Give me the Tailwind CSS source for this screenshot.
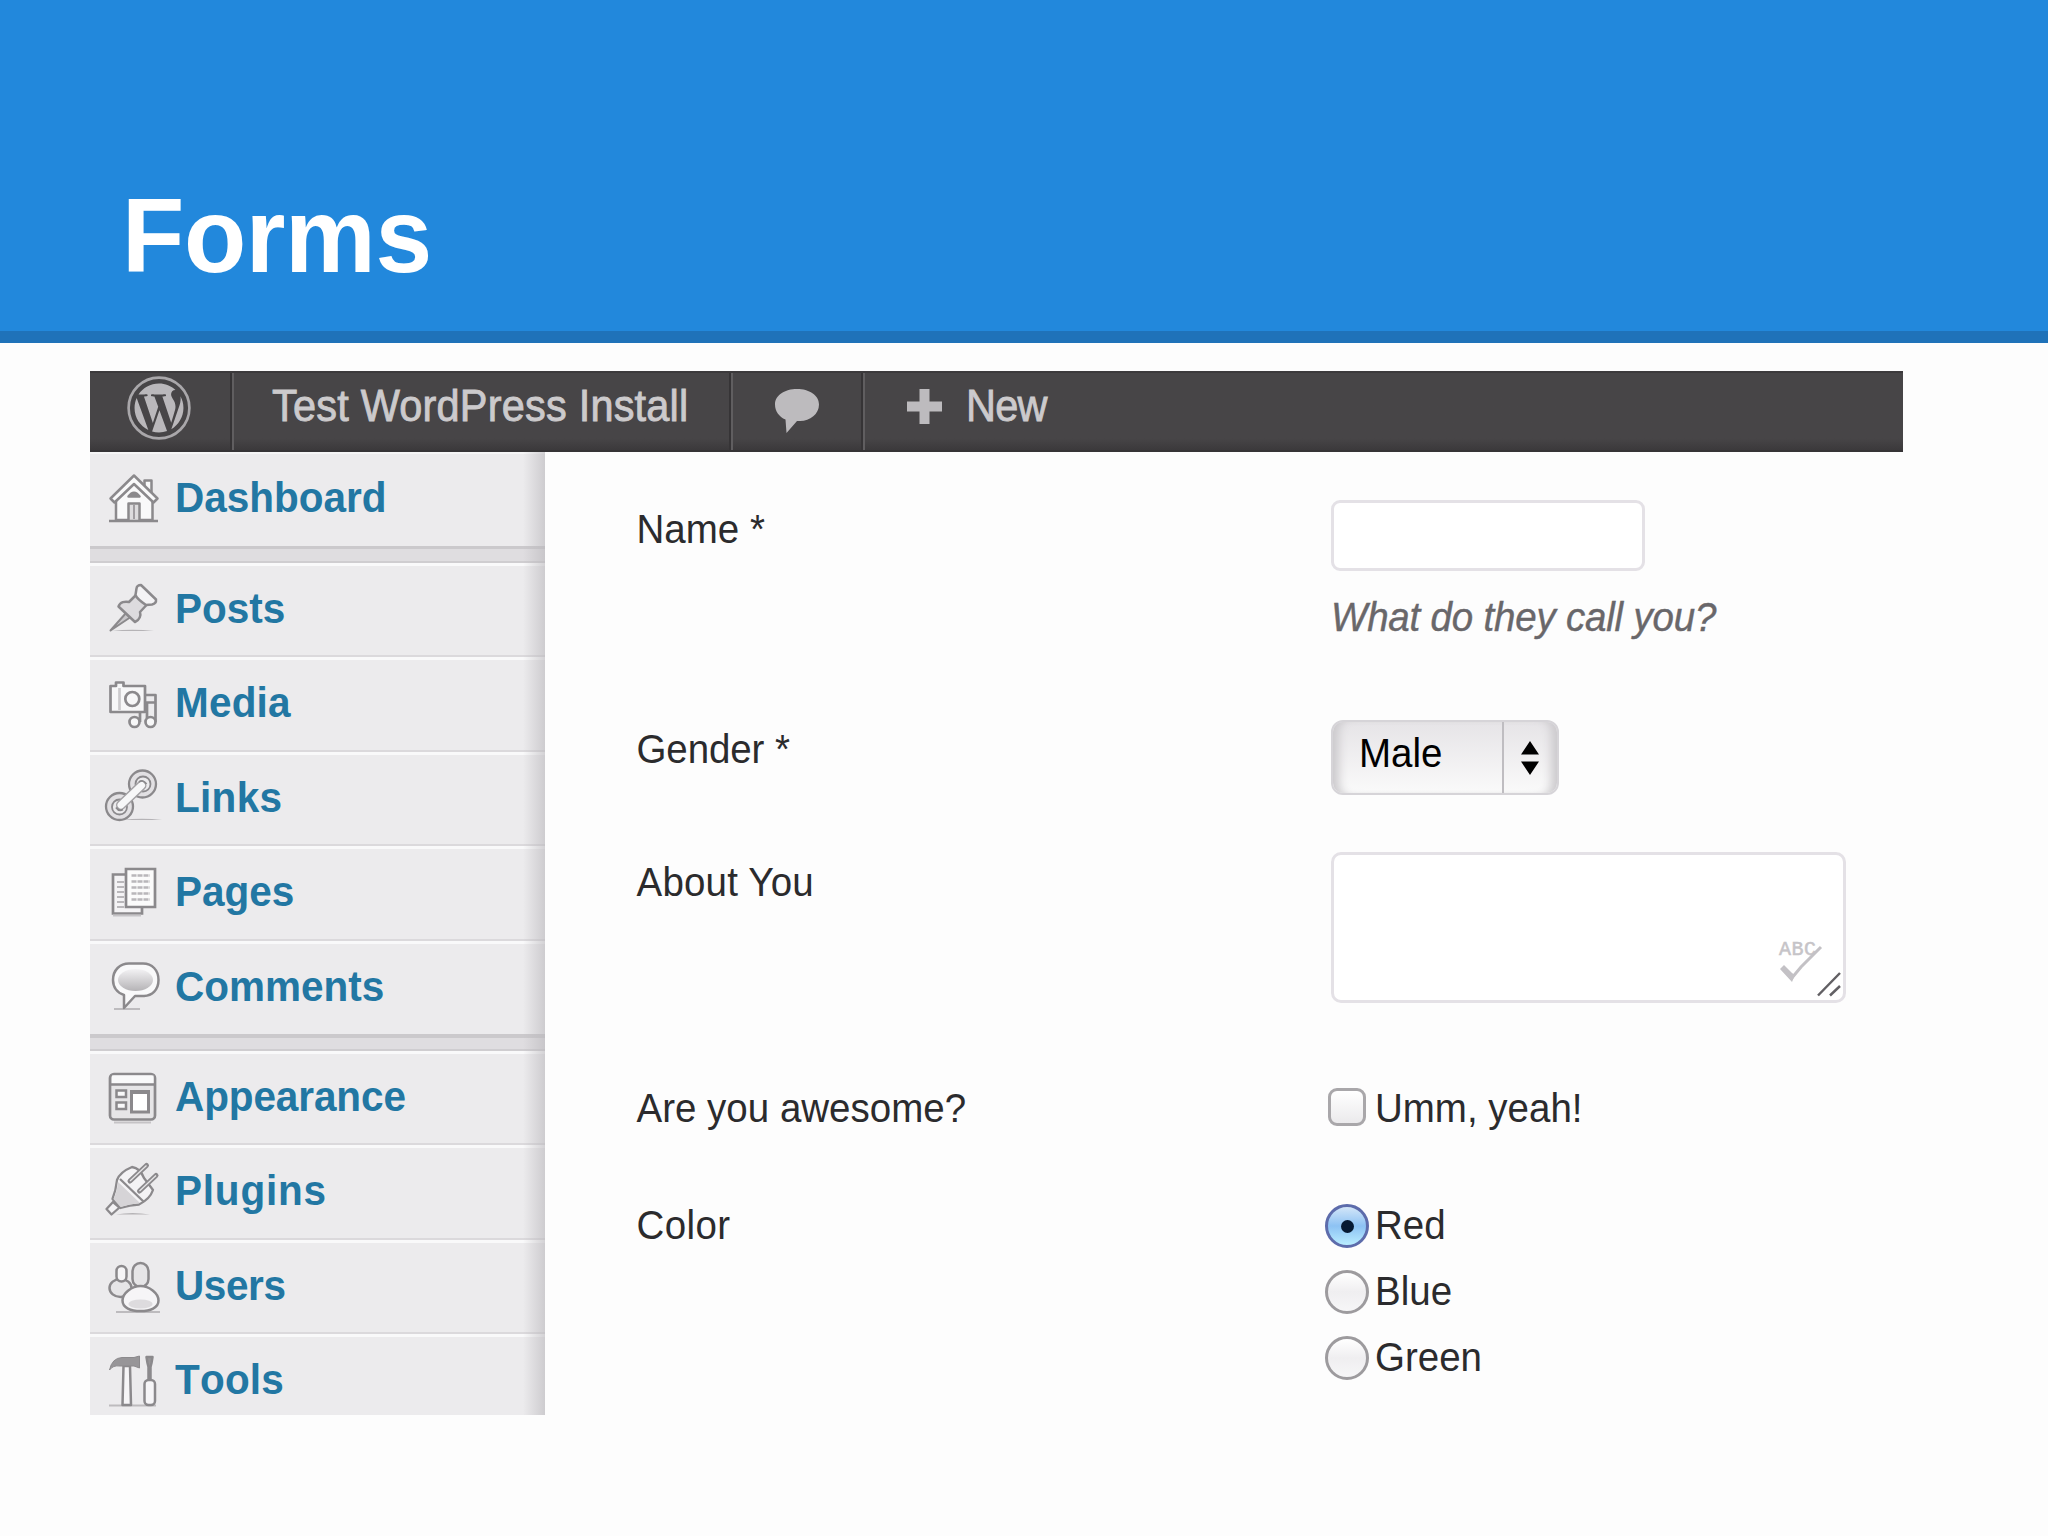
<!DOCTYPE html>
<html lang="en">

<head>
  <meta charset="UTF-8">
  <meta name="viewport" content="width=device-width, initial-scale=1.0">
  <title>Forms</title>
  <script src="https://cdn.jsdelivr.net/npm/@tailwindcss/browser@4"></script>
</head>

<body class="w-[2048px] h-[1536px] overflow-hidden bg-[#fdfdfd] font-['Liberation_Sans',Arial,sans-serif]">
  <header class="h-[343px] bg-[#2288dc] border-b-12 border-[#1f72b9] pl-[122px] pt-[176px]">
    <h1 class="origin-[0_97px] scale-y-[1.045] text-[102px] leading-[123px] font-bold text-white tracking-[-0.4px] [font-kerning:none]">Forms</h1>
  </header>

  <main class="ml-[90px] mt-[28px] w-[1813px] h-[1044px] overflow-hidden">
    <!-- admin bar -->
    <nav class="flex h-[81px] bg-linear-to-b from-[#474547] from-85% to-[#3b393b] border-t-2 border-b-2 border-t-[#3c3a3c] border-b-[#363436] text-[41.500px] leading-[68px] text-[#cccacc] [-webkit-text-stroke:0.8px_#cccacc]">
      <div class="w-[142px] pl-[37px] pt-[3px] border-r-2 border-[#363436]">
        <svg class="size-[64px]" viewBox="0 0 24 24" fill="#bab8bb">
          <circle cx="12" cy="12" r="11.4" fill="none" stroke="#a9a7aa" stroke-width="1" />
          <path transform="translate(1.8 1.8) scale(.85)" d="M21.469 6.825c.84 1.537 1.318 3.3 1.318 5.175 0 3.979-2.156 7.456-5.363 9.325l3.295-9.527c.615-1.54.82-2.771.82-3.864 0-.405-.026-.78-.07-1.11m-7.981.105c.647-.03 1.232-.105 1.232-.105.582-.075.514-.93-.067-.899 0 0-1.755.135-2.88.135-1.064 0-2.85-.15-2.85-.15-.585-.03-.661.855-.075.885 0 0 .54.061 1.125.09l1.68 4.605-2.37 7.08L5.354 6.9c.649-.03 1.234-.1 1.234-.1.585-.075.516-.93-.065-.896 0 0-1.746.138-2.874.138-.2 0-.438-.008-.69-.015C4.911 3.15 8.235 1.215 12 1.215c2.809 0 5.365 1.072 7.286 2.833-.046-.003-.091-.009-.141-.009-1.06 0-1.812.923-1.812 1.914 0 .89.513 1.643 1.06 2.531.411.72.89 1.643.89 2.977 0 .915-.354 1.994-.821 3.479l-1.075 3.585-3.9-11.61.001.014zM12 22.784c-1.059 0-2.081-.153-3.048-.437l3.237-9.406 3.315 9.087c.024.053.05.101.078.149-1.12.393-2.325.609-3.582.609M1.211 12c0-1.564.336-3.05.935-4.39L7.29 21.709C3.694 19.96 1.212 16.271 1.211 12" />
        </svg>
      </div>
      <div class="w-[499px] pl-[38px] border-l-2 border-r-2 border-l-[#605e60] border-r-[#363436]">
        <span class="block origin-[0_49px] scale-y-105 tracking-[0.2px]">Test WordPress Install</span>
      </div>
      <div class="w-[132px] pl-[40px] pt-[14px] border-l-2 border-r-2 border-l-[#605e60] border-r-[#363436]">
        <svg class="w-[48px] h-[48px]" viewBox="0 0 48 48">
          <path d="M24 2C36 2 46 8 46 17.500S37 34 27 34H24L13.500 46L12.500 32.500C6 30 2 24 2 17.500C2 8 12 2 24 2Z" fill="#bdbbbe" />
        </svg>
      </div>
      <div class="flex pl-[42px] border-l-2 border-[#605e60]">
        <svg class="mt-[16px] size-[35px]" viewBox="0 0 35 35">
          <path d="M12.500 0h10v12.500H35v10H22.500V35h-10V22.500H0v-10h12.500z" fill="#bdbbbe" />
        </svg>
        <span class="ml-[24px] origin-[0_49px] scale-y-105 tracking-[-0.8px]">New</span>
      </div>
    </nav>

    <div class="flex h-[963px]">
      <aside class="relative w-[455px] overflow-hidden bg-[#ecebed] text-[40.500px] leading-[87px] font-bold text-[#2277a3]">
        <a class="flex h-[94px] border-t-2 border-[#f5f5f6]">
          <svg class="ml-[12px] mt-[13px] mr-[13px] size-[60px] shrink-0" viewBox="0 0 60 60" fill="#f9f9fa" stroke="#8b898c" stroke-width="2.5" stroke-linejoin="round">
            <path d="M42.500 20V13.500H49.500V28" />
            <path d="M14 53V31L32 14L50.500 31V53Z" />
            <path d="M32 8.500L8.500 31.500L12.500 35.500L32 17L51.500 35.500L55.500 31.500Z" />
            <path d="M26.500 29.500Q32 22 37.500 29.500Z" fill="#8b898c" />
            <path d="M26.500 53V36.500H37.500V53" fill="#dddcde" />
            <path d="M32 38V52" stroke-width="1.5" />
            <path d="M7 54H56" />
          </svg>
          <span class="mt-px origin-[0_57px] scale-y-[1.06]">Dashboard</span>
        </a>
        <div class="h-[17px] bg-[#dfdde0] border-t-3 border-b-2 border-t-[#cbc9cc] border-b-[#cfcdd0]"></div>

        <a class="flex h-[94.4px] border-t-3 border-b-2 border-t-[#f9f9fa] border-b-[#dbd9dc]">
          <svg class="ml-[12px] mt-[12px] mr-[13px] size-[60px] shrink-0" viewBox="0 0 60 60" fill="#f4f3f5" stroke="#8b898c" stroke-width="2.5" stroke-linejoin="round">
            <path d="M10 53Q30 50.500 52 53Z" stroke="none" fill="#b5b3b6" />
            <path d="M24 35L8.500 52.500L28 39.500Z" fill="#c9c7ca" stroke-width="2" />
            <path d="M34 17L27 24C23 23 18 24 16.500 28.500L33 44C38 42 39 37 38 34L44.500 27Z" fill="#dddbde" />
            <path d="M34.500 10.500Q35 7 39 7L54 21.500Q54.500 25.500 50 26.500L44 27Q35 21 33.500 17Z" />
          </svg>
          <span class="origin-[0_57px] scale-y-[1.06]">Posts</span>
        </a>
        <a class="flex h-[94.4px] border-t-3 border-b-2 border-t-[#f9f9fa] border-b-[#dbd9dc]">
          <svg class="ml-[12px] mt-[12px] mr-[13px] size-[60px] shrink-0" viewBox="0 0 60 60" fill="#f7f7f8" stroke="#8b898c" stroke-width="2.700" stroke-linejoin="round">
            <path d="M38 40V50M53.500 23V50M43 23H53.500V30.500H43M45 30V46" fill="none" />
            <path d="M8.500 14H14V10.500H21.500V14H43V40H8.500Z" />
            <path d="M17.500 16V38" stroke="#cccacd" />
            <circle cx="30.300" cy="27" r="7" />
            <circle cx="32.500" cy="50" r="5" />
            <circle cx="48.500" cy="50" r="5" />
          </svg>
          <span class="origin-[0_57px] scale-y-[1.06] tracking-[0.2px]">Media</span>
        </a>
        <a class="flex h-[94.4px] border-t-3 border-b-2 border-t-[#f9f9fa] border-b-[#dbd9dc]">
          <svg class="ml-[12px] mt-[12px] mr-[13px] size-[60px] shrink-0 overflow-visible" viewBox="0 0 60 60" fill="none" stroke="#8b898c" stroke-width="2.300" stroke-linejoin="round">
            <path d="M20 53Q40 50.500 60 53Z" stroke="none" fill="#b5b3b6" />
            <circle cx="40.500" cy="17" r="13.500" fill="#e2e0e3" />
            <circle cx="41" cy="17" r="7.500" fill="#ecebed" stroke-width="1.800" />
            <circle cx="17.500" cy="39.500" r="13.500" fill="#e2e0e3" />
            <circle cx="17.500" cy="40" r="7.500" fill="#ecebed" stroke-width="1.800" />
            <path d="M19 38L39.500 18.500" stroke-width="10" stroke-linecap="round" stroke="#a3a1a4" />
            <path d="M19 38L39.500 18.500" stroke="#f7f7f8" stroke-width="7" stroke-linecap="round" />
            <path d="M37 15Q41 12 44.500 17M21 42.500Q17 45 14 40.500" stroke-width="1.800" />
          </svg>
          <span class="origin-[0_57px] scale-y-[1.06] tracking-[0.3px]">Links</span>
        </a>
        <a class="flex h-[94.4px] border-t-3 border-b-2 border-t-[#f9f9fa] border-b-[#dbd9dc]">
          <svg class="ml-[12px] mt-[12px] mr-[13px] size-[60px] shrink-0" viewBox="0 0 60 60" fill="#f4f3f5" stroke="#8b898c" stroke-width="2.700">
            <path d="M11 13.500H40V52.500H11Z" />
            <path d="M15 21H22M15 26H22M15 31H22M15 36H22M15 41H22M15 46H22" stroke="#b9b7ba" stroke-width="2" />
            <path d="M24 8H53V46H24Z" fill="#fbfbfb" />
            <path d="M29.500 14.500H48M29.500 20.500H48M29.500 26.500H48M29.500 32.500H48M29.500 38.500H48" stroke="#b9b7ba" stroke-width="2.500" stroke-dasharray="5 1" />
            <path d="M11 54.500H39" stroke="#c5c3c6" stroke-width="2" />
          </svg>
          <span class="origin-[0_57px] scale-y-[1.06]">Pages</span>
        </a>
        <a class="flex h-[93.400px] border-t-3 border-[#f9f9fa]">
          <svg class="ml-[12px] mt-[12px] mr-[13px] size-[60px] shrink-0" viewBox="0 0 60 60" fill="#f9f9fa" stroke="#8b898c" stroke-width="2.500" stroke-linejoin="round">
            <defs>
              <linearGradient id="bubble" x2="0" y2="1">
                <stop offset="0" stop-color="#f3f2f4" />
                <stop offset="1" stop-color="#b5b3b6" />
              </linearGradient>
            </defs>
            <path d="M12 53H38" stroke="#bdbbbe" stroke-width="2" />
            <path d="M27 7.500H41C50 7.500 56.500 14 56.500 24S50 39.500 42 40H33L22 52V39C15 37 11 31 11 24C11 14 18 7.500 27 7.500Z" />
            <ellipse cx="33.500" cy="24" rx="17.500" ry="11" fill="url(#bubble)" stroke="none" />
          </svg>
          <span class="origin-[0_57px] scale-y-[1.06]">Comments</span>
        </a>
        <div class="h-[17px] bg-[#dfdde0] border-t-4 border-b-2 border-t-[#cbc9cc] border-b-[#cfcdd0]"></div>

        <a class="flex h-[94.4px] border-t-3 border-b-2 border-t-[#f9f9fa] border-b-[#dbd9dc]">
          <svg class="ml-[12px] mt-[12px] mr-[13px] size-[60px] shrink-0" viewBox="0 0 60 60" fill="#f9f9fa" stroke="#8b898c" stroke-width="2.700">
            <path d="M12 56.500H49" stroke="#c5c3c6" stroke-width="2" />
            <rect x="8" y="8" width="45" height="45.500" rx="4" fill="#e6e5e7" />
            <path d="M10 17.500V9.500H51.500V17.500Z" stroke="none" />
            <path d="M8 18.500H53" stroke-width="2.500" />
            <path d="M14.500 24.500H24V31H14.500ZM14.500 36.500H24V43H14.500Z" stroke-width="2.500" />
            <path d="M29.500 25.500H46.500V46H29.500Z" fill="#fff" stroke-width="3" />
            <path d="M28 26H48" stroke-width="4" />
          </svg>
          <span class="origin-[0_57px] scale-y-[1.06] tracking-[-0.1px]">Appearance</span>
        </a>
        <a class="flex h-[94.4px] border-t-3 border-b-2 border-t-[#f9f9fa] border-b-[#dbd9dc]">
          <svg class="ml-[12px] mt-[12px] mr-[13px] size-[60px] shrink-0" viewBox="0 0 60 60" fill="#f4f3f5" stroke="#8b898c" stroke-width="2.300" stroke-linejoin="round">
            <path d="M14 54.500Q30 51.500 48 54.500Z" stroke="none" fill="#b5b3b6" />
            <path d="M11 42L4.500 49L9.500 54.500L17.500 47.500Z" />
            <path d="M30 7Q18 12 15 20Q14 30 10.500 39L18.500 48Q28 45 37 44.500Q48 39 51 30L42 18Q38 8 30 7Z" />
            <path d="M16 22Q15 32 11.500 39L18.500 47Q28 44 38 43Z" fill="#d6d4d7" stroke="none" />
            <path d="M18 19L42 42" />
            <path d="M28 21L44.500 5.500M37.500 31L54 15.500" stroke-width="5" stroke-linecap="round" />
            <path d="M28 21L44.500 5.500M37.500 31L54 15.500" stroke="#e6e5e7" stroke-width="1.300" />
          </svg>
          <span class="origin-[0_57px] scale-y-[1.06] tracking-[0.8px]">Plugins</span>
        </a>
        <a class="flex h-[94.4px] border-t-3 border-b-2 border-t-[#f9f9fa] border-b-[#dbd9dc]">
          <svg class="ml-[12px] mt-[12px] mr-[13px] size-[60px] shrink-0" viewBox="0 0 60 60" fill="#f6f5f7" stroke="#8b898c" stroke-width="2.500">
            <path d="M14 57H58" stroke="#bdbbbe" stroke-width="2" />
            <ellipse cx="18.500" cy="33" rx="11" ry="9" fill="#e6e5e7" />
            <rect x="14.500" y="11" width="10" height="15.500" rx="5" />
            <rect x="30.500" y="8" width="16" height="24" rx="8" fill="#e6e5e7" />
            <path d="M38.500 31C47 31 56.500 38 56.500 45.500S48 56 38.500 56S20.500 53 20.500 45.500S30 31 38.500 31Z" />
            <ellipse cx="38.500" cy="49" rx="12" ry="4.500" fill="#dddbde" stroke="none" />
          </svg>
          <span class="origin-[0_57px] scale-y-[1.06] tracking-[-0.4px]">Users</span>
        </a>
        <a class="flex h-[94.4px] border-t-3 border-[#f9f9fa]">
          <svg class="ml-[12px] mt-[12px] mr-[13px] size-[60px] shrink-0" viewBox="0 0 60 60" fill="#f6f5f7" stroke="#8b898c" stroke-width="2.500" stroke-linejoin="round">
            <path d="M7 56.500H54" stroke="#bdbbbe" stroke-width="2" />
            <path d="M21.500 17H28L29 56H20.500Z" />
            <path d="M7.500 21Q10 9 20 8.500H32L37.500 7V19L32 17H18Q11 16 7.500 21Z" fill="#979598" stroke-width="1" />
            <path d="M44.500 8H50.500L49.500 14L48.500 18V31H46.500V18L45.500 14Z" fill="#979598" />
            <rect x="42.500" y="31" width="10.500" height="25" rx="4" />
          </svg>
          <span class="origin-[0_57px] scale-y-[1.06] tracking-[0.2px] [font-kerning:none]">Tools</span>
        </a>
        <!-- inner shadow along the right edge of the menu -->
        <div class="absolute inset-y-0 right-0 w-[22px] bg-linear-to-r from-transparent to-[#b9b7bb]/60"></div>
      </aside>

      <form class="flex-1 pl-[91.500px] pt-[48px] text-[38.500px] leading-[48px] text-[#2b2b2d]">
        <div class="flex h-[220px]">
          <label class="w-[694.500px] pt-[5.500px] origin-[0_43px] scale-y-105">Name *</label>
          <div>
            <div class="w-[314px] h-[71px] rounded-[9px] border-3 border-[#e4e1e6] bg-white"></div>
            <p class="mt-[23px] origin-[0_38px] scale-y-105 italic text-[#69676a] tracking-[-0.2px] [-webkit-text-stroke:0.4px_#69676a]">What do they call you?</p>
          </div>
        </div>

        <div class="flex h-[132px]">
          <label class="w-[694.500px] pt-[5.500px] origin-[0_43px] scale-y-105 tracking-[-0.1px]">Gender *</label>
          <div class="flex w-[228px] h-[75px] rounded-[12px] border-2 border-[#d6d4d8] bg-linear-to-b from-[#e6e4e7] to-[#fafafa] shadow-[inset_12px_0_10px_-6px_#cccacd,inset_-12px_0_10px_-6px_#cccacd]">
            <span class="w-[171px] pl-[26px] leading-[64px] text-black border-r-2 border-[#bfbdc1]">
              <span class="block origin-[0_45px] scale-y-105">Male</span>
            </span>
            <svg class="ml-[16px] mt-[19px] w-[20px] h-[34px]" viewBox="0 0 20 34">
              <path d="M10 0L19 13.500H1ZM1 20.500H19L10 34Z" />
            </svg>
          </div>
        </div>

        <div class="flex h-[228px]">
          <label class="w-[694.500px] pt-[6.500px] origin-[0_43px] scale-y-105 tracking-[0.2px]">About You</label>
          <div class="flex justify-end items-end w-[515px] h-[151px] rounded-[10px] border-3 border-[#e4e1e6] bg-white">
            <svg class="w-[68px] h-[64px]" viewBox="0 0 68 64">
              <text x="4" y="19" font-size="20" letter-spacing="0.5" font-family="Liberation Mono" fill="#c6c4c8" stroke="#c6c4c8" stroke-width="0.5">ABC</text>
              <path d="M5 33L9 29L17 37L20 39L17 46Z" fill="#c3c1c5" />
              <path d="M16 43L26 31L46 11" stroke="#c3c1c5" stroke-width="3" fill="none" />
              <path d="M43 59.500L65 37M55 59.500L65 50" stroke="#626064" stroke-width="2.500" fill="none" />
            </svg>
          </div>
        </div>

        <div class="flex h-[113px]">
          <label class="w-[694.500px] pt-[4.500px] origin-[0_42px] scale-y-105">Are you awesome?</label>
          <div class="flex pt-[4.500px] -ml-[3px]">
            <span class="mt-[3px] size-[38px] rounded-[9px] border-3 border-[#a9a7aa] bg-linear-to-b from-white to-[#ebeaec]"></span>
            <span class="ml-[9px] origin-[0_38px] scale-y-105">Umm, yeah!</span>
          </div>
        </div>

        <div class="flex">
          <label class="w-[694.500px] pt-[8.500px] origin-[0_46px] scale-y-105 tracking-[0.4px]">Color</label>
          <div class="-ml-[6px]">
            <div class="flex items-center h-[66px]">
              <span class="flex items-center justify-center size-[44px] rounded-full border-3 border-[#5d6cab] bg-linear-to-b from-[#d3e6f8] via-[#8dc2f3] to-[#b9edff]">
                <span class="size-[13px] rounded-full bg-[#061a33]"></span>
              </span>
              <span class="ml-[6px] origin-[0_38px] scale-y-105">Red</span>
            </div>
            <div class="flex items-center h-[66px]">
              <span class="size-[44px] rounded-full border-3 border-[#9d9b9e] bg-linear-to-b from-white via-[#efeef0] to-[#f6f6f7]"></span>
              <span class="ml-[6px] origin-[0_38px] scale-y-105">Blue</span>
            </div>
            <div class="flex items-center h-[66px]">
              <span class="size-[44px] rounded-full border-3 border-[#9d9b9e] bg-linear-to-b from-white via-[#efeef0] to-[#f6f6f7]"></span>
              <span class="ml-[6px] origin-[0_38px] scale-y-105">Green</span>
            </div>
          </div>
        </div>
      </form>
    </div>
  </main>
</body>

</html>
